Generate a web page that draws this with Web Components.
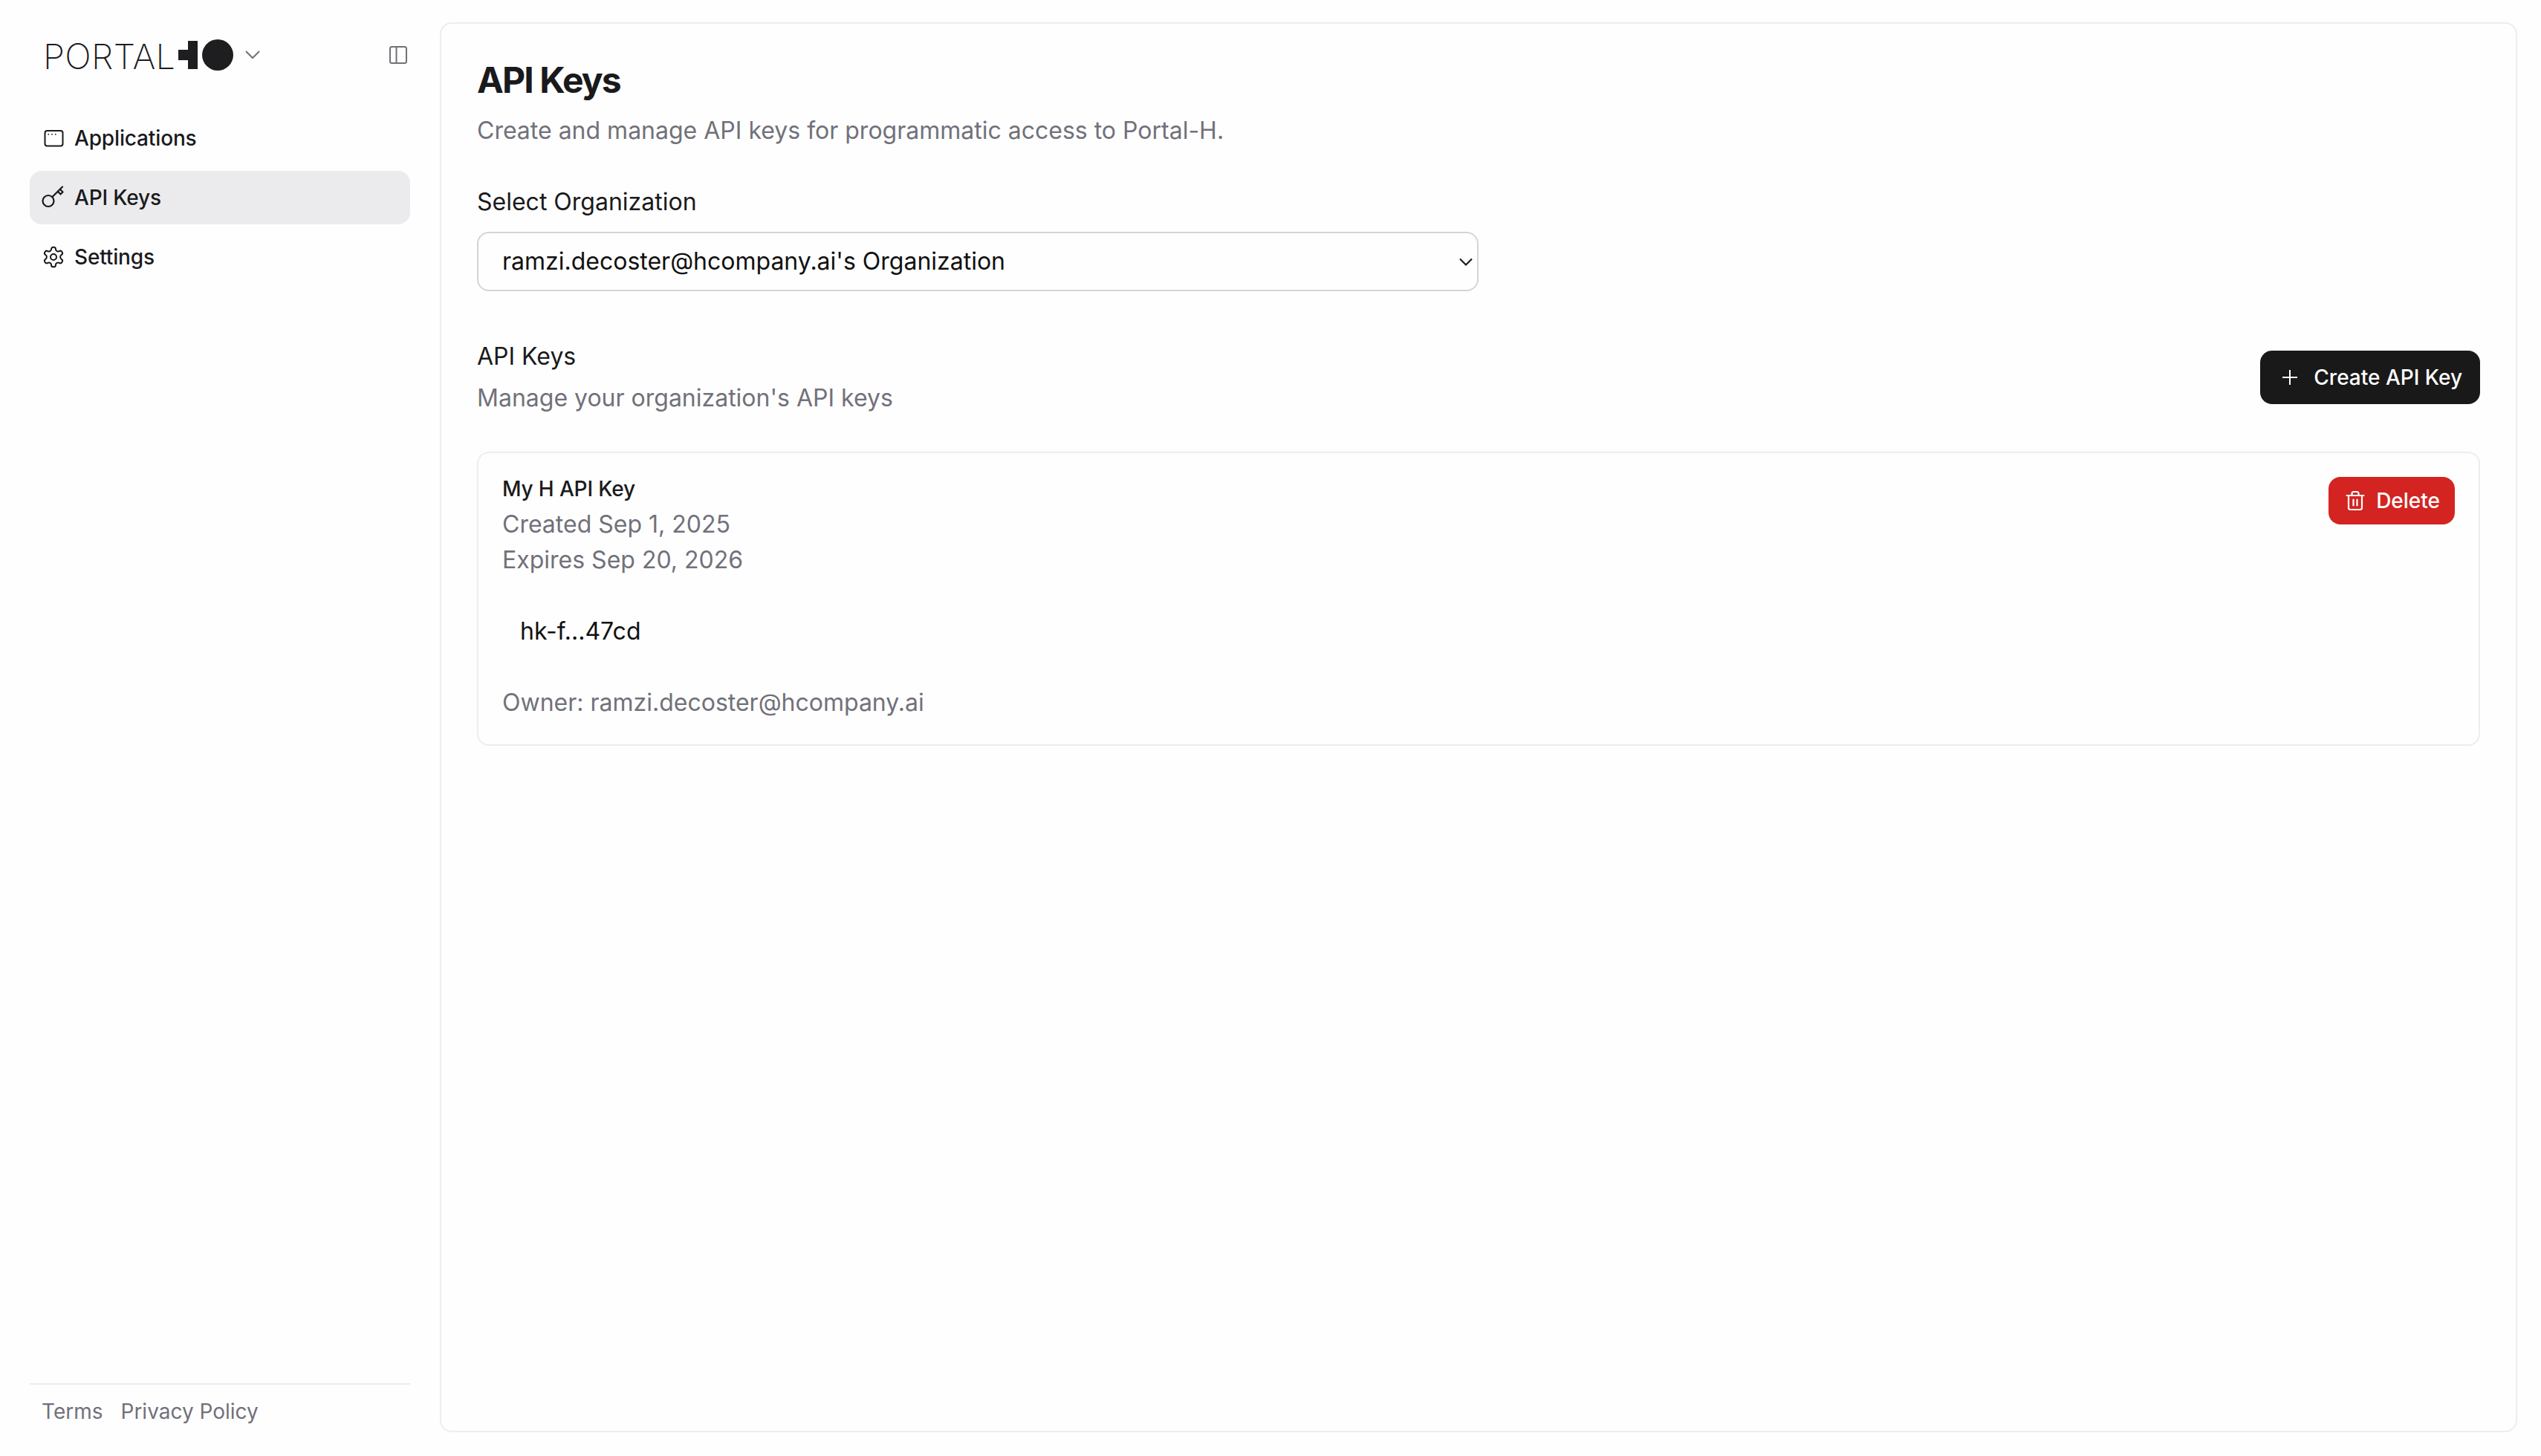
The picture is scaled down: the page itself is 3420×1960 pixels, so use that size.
<!DOCTYPE html>
<html lang="en"><head><meta charset="utf-8"><title>API Keys</title>
<style>
html,body{margin:0;height:100%;background:#fefefe;}
body{font-family:Inter,"Liberation Sans",sans-serif;color:#1a1a1c;}
</style></head>
<body>
<app-shell>
  <side-nav slot="side">
    <portal-logo slot="logo"></portal-logo>
    <nav-item icon="app">Applications</nav-item>
    <nav-item icon="key" active>API Keys</nav-item>
    <nav-item icon="gear">Settings</nav-item>
    <footer-links slot="foot"></footer-links>
  </side-nav>
  <page-card>
    <page-header title="API Keys">Create and manage API keys for programmatic access to Portal-H.</page-header>
    <org-select label="Select Organization" value="ramzi.decoster@hcompany.ai's Organization"></org-select>
    <section-head title="API Keys" sub="Manage your organization's API keys">
      <ui-button variant="dark" icon="plus">Create API Key</ui-button>
    </section-head>
    <key-card name="My H API Key" created="Created Sep 1, 2025" expires="Expires Sep 20, 2026" token="hk-f...47cd" owner="Owner: ramzi.decoster@hcompany.ai">
      <ui-button variant="danger" icon="trash">Delete</ui-button>
    </key-card>
  </page-card>
</app-shell>
<script>
const ICONS={
 app:'<svg width="32" height="32" viewBox="0 0 32 32" fill="none" stroke="currentColor" stroke-width="2"><rect x="4.5" y="6" width="24" height="20.5" rx="3"/><g stroke="none" fill="currentColor"><rect x="8.5" y="10" width="1.6" height="1.6"/><rect x="13.2" y="10" width="1.6" height="1.6"/><rect x="18" y="10" width="1.6" height="1.6"/></g></svg>',
 key:'<svg width="32" height="32" viewBox="0 0 32 32" fill="none" stroke="currentColor" stroke-width="2.2" stroke-linejoin="round" stroke-linecap="round"><circle cx="9" cy="20.5" r="7.5"/><path d="M14.500 15 28 1.500"/><path d="M22 8l3.500 3.500 3-3L25 5"/></svg>',
 gear:'<svg width="32" height="32" viewBox="0 0 24 24" fill="none" stroke="currentColor" stroke-width="1.5" stroke-linecap="round" stroke-linejoin="round"><path d="M12.22 2h-.44a2 2 0 0 0-2 2v.18a2 2 0 0 1-1 1.73l-.43.25a2 2 0 0 1-2 0l-.15-.08a2 2 0 0 0-2.73.73l-.22.38a2 2 0 0 0 .73 2.73l.15.1a2 2 0 0 1 1 1.72v.51a2 2 0 0 1-1 1.74l-.15.09a2 2 0 0 0-.73 2.73l.22.38a2 2 0 0 0 2.73.73l.15-.08a2 2 0 0 1 2 0l.43.25a2 2 0 0 1 1 1.73V20a2 2 0 0 0 2 2h.44a2 2 0 0 0 2-2v-.18a2 2 0 0 1 1-1.73l.43-.25a2 2 0 0 1 2 0l.15.08a2 2 0 0 0 2.73-.73l.22-.39a2 2 0 0 0-.73-2.73l-.15-.08a2 2 0 0 1-1-1.74v-.5a2 2 0 0 1 1-1.74l.15-.09a2 2 0 0 0 .73-2.73l-.22-.38a2 2 0 0 0-2.73-.73l-.15.08a2 2 0 0 1-2 0l-.43-.25a2 2 0 0 1-1-1.73V4a2 2 0 0 0-2-2z"/><circle cx="12" cy="12" r="3"/></svg>',
 plus:'<svg width="32" height="32" viewBox="0 0 32 32" fill="none" stroke="currentColor" stroke-width="2"><path d="M6 16h20M16 6v20"/></svg>',
 trash:'<svg width="32" height="32" viewBox="0 0 32 32" fill="none" stroke="currentColor" stroke-width="2.2" stroke-linecap="round" stroke-linejoin="round"><path d="M4.5 9h23"/><path d="M7 9v16.500a2.500 2.500 0 0 0 2.500 2.500h13a2.500 2.500 0 0 0 2.500-2.500V9"/><path d="M11.500 9V6.500a2.500 2.500 0 0 1 2.500-2.500h4a2.500 2.500 0 0 1 2.500 2.500V9"/><path d="M13.500 14.500v8M18.500 14.500v8"/></svg>'
};
function def(name,html){
  customElements.define(name,class extends HTMLElement{
    constructor(){super();this.attachShadow({mode:'open'});}
    connectedCallback(){
      const a=n=>(this.getAttribute(n)||'');
      this.shadowRoot.innerHTML=html(a,this);
    }
  });
}
def('app-shell',()=>`<style>
:host{display:flex;box-sizing:border-box;width:100%;height:100vh;padding:30px 32px 32px 40px;gap:40px;min-height:0}
::slotted(side-nav){flex:0 0 512px}
</style><slot name="side"></slot><slot></slot>`);
def('side-nav',()=>`<style>
:host{display:flex;flex-direction:column;margin-bottom:-32px}
.logo{display:flex;align-items:center;justify-content:space-between;height:88px;margin-bottom:32px;padding:0 4px 0 18px}
nav{display:flex;flex-direction:column;gap:8px;flex:1}
</style><div class="logo"><slot name="logo"></slot><svg width="24" height="24" viewBox="0 0 24 24" fill="none" stroke="#71717a" stroke-width="2"><rect x="1" y="1" width="22" height="22" rx="2.500"/><path d="M9.500 1v22"/></svg></div><nav><slot></slot></nav><slot name="foot"></slot>`);
def('portal-logo',()=>`<style>
:host{display:flex;align-items:center;height:48px}
.t{font:250 47px/48px Inter,"Liberation Sans",sans-serif;letter-spacing:.3px;color:#1c1c1e;padding-top:4px}
svg{display:block;margin-left:4px}.c{margin-left:14px}
</style><span class="t">PORTAL</span><svg width="76" height="42" viewBox="0 0 76 42"><path d="M0 14h13V2h13v38H13V28H0z" fill="#1e1e20"/><circle cx="53" cy="21" r="21" fill="#1e1e20"/></svg><svg class="c" width="20" height="12" viewBox="0 0 20 12" fill="none" stroke="#71717a" stroke-width="2"><path d="M1 1l9 9 9-9"/></svg>`);
def('nav-item',(a,el)=>`<style>
:host{display:flex;align-items:center;gap:12px;height:72px;padding:0 16px;border-radius:16px;font:450 28px/40px Inter,"Liberation Sans",sans-serif;letter-spacing:-.15px;color:#1a1a1c;background:${el.hasAttribute('active')?'#ebebed':'transparent'}}
svg{display:block;flex:none}
</style>${ICONS[a('icon')]}<span><slot></slot></span>`);
def('footer-links',()=>`<style>
:host{display:flex;gap:24px;border-top:2px solid #ededee;padding:16px 16px 40px;font:400 28px/40px Inter,"Liberation Sans",sans-serif;color:#71717a;height:40px}
</style><span>Terms</span><span>Privacy Policy</span>`);
def('page-card',()=>`<style>
:host{display:block;flex:1;min-width:0;box-sizing:border-box;border:2px solid #ededee;border-radius:16px;padding:48px;background:#fefefe}
</style><slot></slot>`);
def('page-header',(a)=>`<style>
:host{display:block;margin-bottom:48px}
h1{margin:0 0 16px;font:650 48px/56px Inter,"Liberation Sans",sans-serif;letter-spacing:-1.9px;color:#1a1a1c}
p{margin:0;font:400 32px/48px Inter,"Liberation Sans",sans-serif;color:#71717a}
</style><h1>${a('title')}</h1><p><slot></slot></p>`);
def('org-select',(a)=>`<style>
:host{display:block;margin-bottom:64px}
label{display:block;font:400 32px/48px Inter,"Liberation Sans",sans-serif;margin-bottom:16px;color:#1a1a1c}
.box{box-sizing:border-box;width:1348px;height:80px;border:2px solid #d1d5db;border-radius:16px;display:flex;align-items:center;justify-content:space-between;padding:0 6px 0 32px;font:400 32px/48px Inter,"Liberation Sans",sans-serif;color:#111;background:#fefefe}
svg{display:block;margin-top:2px}
</style><label>${a('label')}</label><div class="box" role="combobox"><span>${a('value')}</span><svg width="18" height="12" viewBox="0 0 18 12" fill="none" stroke="#1a1a1c" stroke-width="2.200"><path d="M1 1.500l8 8 8-8"/></svg></div>`);
def('section-head',(a)=>`<style>
:host{display:flex;justify-content:space-between;align-items:center;margin-bottom:48px}
.h{font:400 32px/48px Inter,"Liberation Sans",sans-serif;margin-bottom:8px;color:#1a1a1c}
.s{font:400 32px/48px Inter,"Liberation Sans",sans-serif;color:#71717a}
</style><div><div class="h">${a('title')}</div><div class="s">${a('sub')}</div></div><slot></slot>`);
def('ui-button',(a)=>{const d=a('variant')==='danger';return `<style>
:host{display:inline-flex;align-items:center;box-sizing:border-box;height:${d?64:72}px;padding:0 ${d?20:24}px 0 ${d?20:24}px;gap:${d?12:16}px;border-radius:16px;background:${d?'#d32421':'#19191a'};color:#fff;font:450 28px/40px Inter,"Liberation Sans",sans-serif;white-space:nowrap}
svg{display:block;flex:none}
</style>${ICONS[a('icon')]}<span><slot></slot></span>`});
def('key-card',(a)=>`<style>
:host{display:flex;justify-content:space-between;align-items:flex-start;border:2px solid #ededee;border-radius:16px;padding:32px}
.n{font:450 28px/32px Inter,"Liberation Sans",sans-serif;letter-spacing:-.15px;color:#1a1a1c;margin-bottom:8px}
.m{font:400 32px/48px Inter,"Liberation Sans",sans-serif;color:#71717a}
.t{font:400 32px/48px Inter,"Liberation Sans",sans-serif;color:#111;margin:48px 0;padding-left:24px}
</style><div><div class="n">${a('name')}</div><div class="m">${a('created')}</div><div class="m">${a('expires')}</div><div class="t">${a('token')}</div><div class="m">${a('owner')}</div></div><slot></slot>`);
</script>
</body></html>
